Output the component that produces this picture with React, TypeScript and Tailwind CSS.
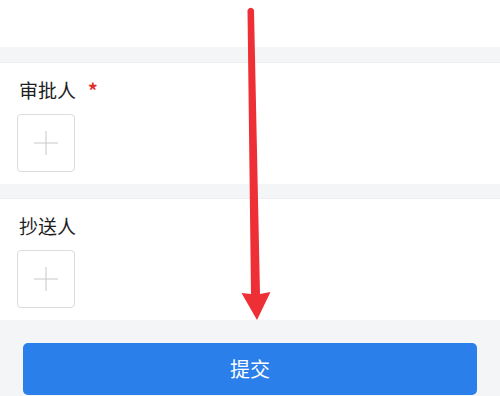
import React from "react";

function AddBox() {
  return (
    <div className="w-[58px] h-[58px] border border-[#dcdcdc] rounded-[4px] flex items-center justify-center">
      <svg width="26" height="26" viewBox="0 0 26 26">
        <line x1="1" y1="13" x2="25" y2="13" stroke="#c8c8c8" strokeWidth="1" />
        <line x1="13" y1="1" x2="13" y2="25" stroke="#c8c8c8" strokeWidth="1" />
      </svg>
    </div>
  );
}

function Section({ label, required }: { label: string; required?: boolean }) {
  return (
    <div className="bg-white pl-[17px] pt-[15px] pb-[13px] h-[122px] border-t border-[#eeeff1]">
      <div className="flex items-center h-[24px] text-[19px] leading-[24px] text-[#1e1e1e] pl-[2px]">
        <span>{label}</span>
        {required && <span className="text-[#e02b2b] ml-[12px] text-[19px] font-bold">*</span>}
      </div>
      <div className="mt-[12px]">
        <AddBox />
      </div>
    </div>
  );
}

export default function App() {
  return (
    <div
      className="relative w-[500px] h-[396px] overflow-hidden bg-[#f4f5f7]"
      style={{ fontFamily: '"Noto Sans CJK SC", "Noto Sans", sans-serif' }}
    >
      <div className="h-[47px] bg-white" />
      <div className="h-[15px]" />
      <Section label="审批人" required />
      <div className="h-[14px]" />
      <Section label="抄送人" />
      <div className="px-[23px] pt-[23px]">
        <button className="w-full h-[52px] rounded-[5px] bg-[#2a7fea] text-white text-[20px] flex items-center justify-center">
          提交
        </button>
      </div>
      <svg
        className="absolute left-0 top-0 pointer-events-none"
        width="500"
        height="396"
        viewBox="0 0 500 396"
      >
        <path
          d="M247.5 10 Q250.75 5.5 254 10 L260 294 L270.5 292 L257 320 L241.5 293 L251 294 Z"
          fill="#ee2f35"
        />
      </svg>
    </div>
  );
}
